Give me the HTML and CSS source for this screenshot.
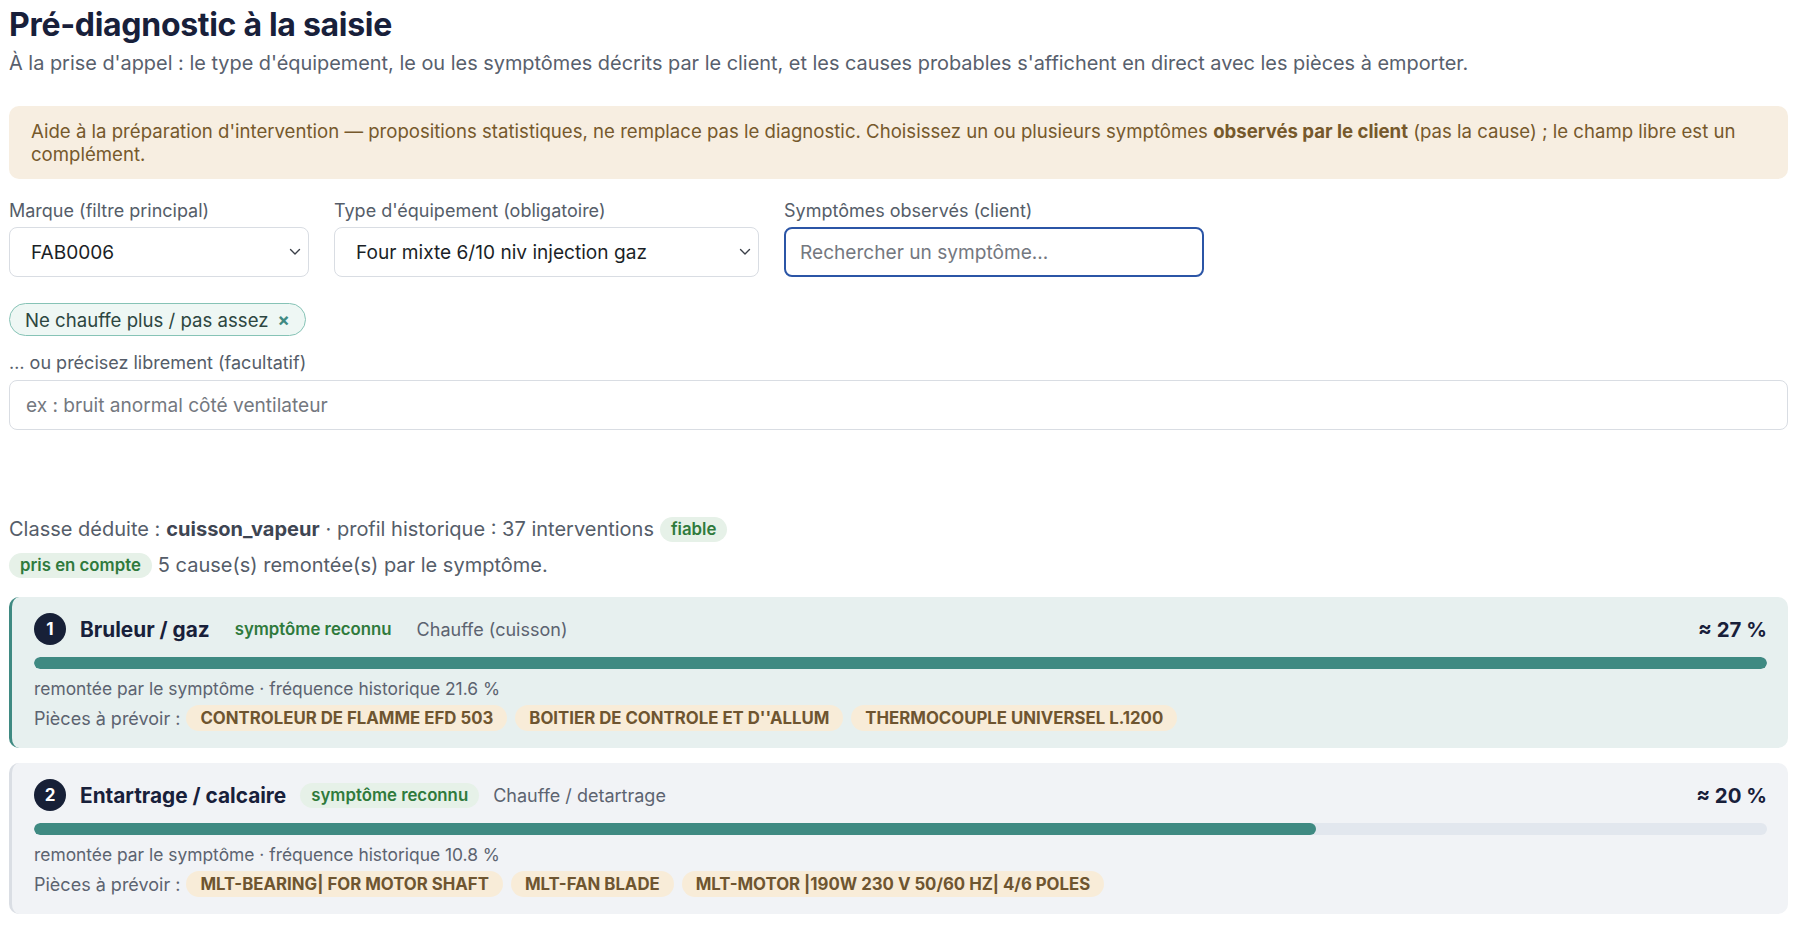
FILE: index.html
```html
<!DOCTYPE html>
<html lang="fr">
<head>
  <meta charset="UTF-8" />
  <meta name="viewport" content="width=device-width, initial-scale=1.0"/>
  <title>Pré-diagnostic à la saisie</title>
  <link rel="stylesheet" href="styles.css">
</head>
<body>
  <div class="page">
    <h1>Pré-diagnostic à la saisie</h1>
    <p class="intro">À la prise d'appel : le type d'équipement, le ou les symptômes décrits par le client, et les causes probables s'affichent en direct avec les pièces à emporter.</p>

    <div class="notice">
      Aide à la préparation d'intervention — propositions statistiques, ne remplace pas le diagnostic. Choisissez un ou plusieurs symptômes <b>observés par le client</b> (pas la cause) ; le champ libre est un<br>complément.
    </div>

    <!-- Filtres -->
    <div class="filters">
      <div class="field field-brand">
        <label>Marque (filtre principal)</label>
        <div class="select-wrap">
          <select><option>FAB0006</option></select>
          <svg class="chevron" width="12" height="8" viewBox="0 0 12 8"><path d="M1.5 1.5 L6 6 L10.5 1.5" /></svg>
        </div>
      </div>
      <div class="field field-type">
        <label>Type d'équipement (obligatoire)</label>
        <div class="select-wrap">
          <select><option>Four mixte 6/10 niv injection gaz</option></select>
          <svg class="chevron" width="12" height="8" viewBox="0 0 12 8"><path d="M1.5 1.5 L6 6 L10.5 1.5" /></svg>
        </div>
      </div>
      <div class="field field-search">
        <label>Symptômes observés (client)</label>
        <input type="text" class="focused" placeholder="Rechercher un symptôme…">
      </div>
    </div>

    <div class="chips">
      <span class="chip">Ne chauffe plus / pas assez <span class="chip-x">×</span></span>
    </div>

    <div class="field field-free">
      <label>… ou précisez librement (facultatif)</label>
      <input type="text" placeholder="ex : bruit anormal côté ventilateur">
    </div>

    <!-- Résultat -->
    <div class="summary">
      <div class="summary-line">Classe déduite : <b>cuisson_vapeur</b> · profil historique : 37 interventions <span class="badge">fiable</span></div>
      <div class="summary-line"><span class="badge">pris en compte</span> 5 cause(s) remontée(s) par le symptôme.</div>
    </div>

    <div class="causes">
      <div class="cause top">
        <div class="cause-head">
          <span class="rank">1</span>
          <span class="cause-name">Bruleur / gaz</span>
          <span class="badge">symptôme reconnu</span>
          <span class="cause-family">Chauffe (cuisson)</span>
          <span class="cause-pct">≈ 27 %</span>
        </div>
        <div class="bar"><div class="bar-fill" style="width: 100%"></div></div>
        <div class="cause-meta">remontée par le symptôme · fréquence historique 21.6 %</div>
        <div class="parts">
          <span class="parts-label">Pièces à prévoir :</span>
          <span class="part">CONTROLEUR DE FLAMME EFD 503</span>
          <span class="part">BOITIER DE CONTROLE ET D''ALLUM</span>
          <span class="part">THERMOCOUPLE UNIVERSEL L.1200</span>
        </div>
      </div>

      <div class="cause">
        <div class="cause-head">
          <span class="rank">2</span>
          <span class="cause-name">Entartrage / calcaire</span>
          <span class="badge">symptôme reconnu</span>
          <span class="cause-family">Chauffe / detartrage</span>
          <span class="cause-pct">≈ 20 %</span>
        </div>
        <div class="bar"><div class="bar-fill" style="width: 74%"></div></div>
        <div class="cause-meta">remontée par le symptôme · fréquence historique 10.8 %</div>
        <div class="parts">
          <span class="parts-label">Pièces à prévoir :</span>
          <span class="part">MLT-BEARING| FOR MOTOR SHAFT</span>
          <span class="part">MLT-FAN BLADE</span>
          <span class="part">MLT-MOTOR |190W 230 V 50/60 HZ| 4/6 POLES</span>
        </div>
      </div>
    </div>
  </div>
</body>
</html>
```

FILE: styles.css
```css
* {
  margin: 0;
  padding: 0;
  box-sizing: border-box;
}

html, body {
  background: #ffffff;
  font-family: Inter, "Noto Sans", sans-serif;
  color: #1b2335;
  overflow: hidden;
}

.page {
  padding: 6px 12px 0 9px;
}

h1 {
  font-size: 32px;
  line-height: 38px;
  font-weight: 700;
  color: #18203a;
  letter-spacing: -0.3px;
}

.intro {
  margin-top: 6px;
  font-size: 19.9px;
  line-height: 26px;
  color: #58606d;
}

.notice {
  margin-top: 30px;
  padding: 14px 22px 13px;
  background-color: #f7eee1;
  border-radius: 10px;
  color: #76592c;
  font-size: 18.6px;
  line-height: 23px;
}

.notice b {
  font-weight: 700;
}

/* Ligne des filtres */
.filters {
  display: flex;
  gap: 25px;
  margin-top: 21px;
}

.field {
  display: flex;
  flex-direction: column;
  gap: 5px;
}

.field label {
  font-size: 18px;
  line-height: 22px;
  color: #555d69;
}

.field-brand { width: 300px; }
.field-type { width: 425px; }
.field-search { width: 420px; }

.select-wrap {
  position: relative;
}

select, input {
  width: 100%;
  height: 50px;
  border: 1px solid #d9dde3;
  border-radius: 8px;
  background: #ffffff;
  font-family: inherit;
  font-size: 19.1px;
  color: #1b1f27;
  padding: 0 21px;
  outline: none;
  appearance: none;
  -webkit-appearance: none;
}

input::placeholder {
  color: #74787f;
}

input.focused {
  border: 2px solid #2b55a6;
  padding: 0 14px;
}

.chevron {
  position: absolute;
  right: 8px;
  top: 21px;
  pointer-events: none;
}

.chevron path {
  fill: none;
  stroke: #3a3f48;
  stroke-width: 1.4;
  stroke-linecap: round;
  stroke-linejoin: round;
}

/* Symptômes choisis */
.chips {
  display: flex;
  margin-top: 26px;
}

.chip {
  display: inline-flex;
  align-items: center;
  gap: 9px;
  height: 33px;
  padding: 0 15px;
  border: 1px solid #86c3b6;
  border-radius: 17px;
  background: #eef7f4;
  color: #2d4641;
  font-size: 18.6px;
}

.chip-x {
  color: #3f8a82;
  font-weight: 700;
  font-size: 18px;
}

.field-free {
  margin-top: 16px;
  gap: 6px;
}

.field-free input {
  padding: 0 16px;
}

/* Résumé */
.summary {
  margin-top: 85px;
  display: flex;
  flex-direction: column;
  gap: 8px;
}

.summary-line {
  display: flex;
  align-items: center;
  gap: 6px;
  height: 28px;
  font-size: 20px;
  color: #555d69;
}

.summary-line b {
  color: #3e4552;
  font-weight: 700;
}

.badge {
  display: inline-flex;
  align-items: center;
  height: 25px;
  padding: 0 11px;
  border-radius: 13px;
  background: #e6f1e8;
  color: #2f7a3c;
  font-size: 16.8px;
  font-weight: 600;
}

/* Causes */
.causes {
  margin-top: 18px;
  display: flex;
  flex-direction: column;
  gap: 15px;
}

.cause {
  padding: 16px 21px 17px 22px;
  background: #f1f3f6;
  border-left: 3px solid #dadee4;
  border-radius: 10px;
}

.cause.top {
  background: #e7f0ef;
  border-left-color: #3f8a82;
}

.cause-head {
  display: flex;
  align-items: center;
  gap: 14px;
  height: 32px;
}

.rank {
  display: flex;
  align-items: center;
  justify-content: center;
  width: 32px;
  height: 32px;
  border-radius: 50%;
  background: #172037;
  color: #ffffff;
  font-size: 17px;
  font-weight: 700;
}

.cause-name {
  font-size: 20.8px;
  font-weight: 700;
  color: #18203a;
}

.cause.top .cause-head .badge {
  background: transparent;
}

.cause-family {
  font-size: 18px;
  color: #5c6370;
}

.cause-pct {
  margin-left: auto;
  font-size: 20.4px;
  font-weight: 700;
  color: #18203a;
}

.bar {
  margin-top: 12px;
  height: 12px;
  border-radius: 6px;
  background: #e2e7ee;
  overflow: hidden;
}

.bar-fill {
  height: 100%;
  border-radius: 6px;
  background: #3f8a82;
}

.cause-meta {
  margin-top: 10px;
  font-size: 17.4px;
  line-height: 20px;
  color: #5c6370;
}

.parts {
  margin-top: 6px;
  display: flex;
  align-items: center;
  gap: 8px;
}

.parts-label {
  font-size: 18px;
  color: #5c6370;
  margin-right: -2px;
}

.part {
  display: inline-flex;
  align-items: center;
  height: 26px;
  padding: 0 14px;
  border-radius: 13px;
  background: #f8ecd8;
  color: #6e5530;
  font-size: 16.8px;
  font-weight: 700;
}
```
